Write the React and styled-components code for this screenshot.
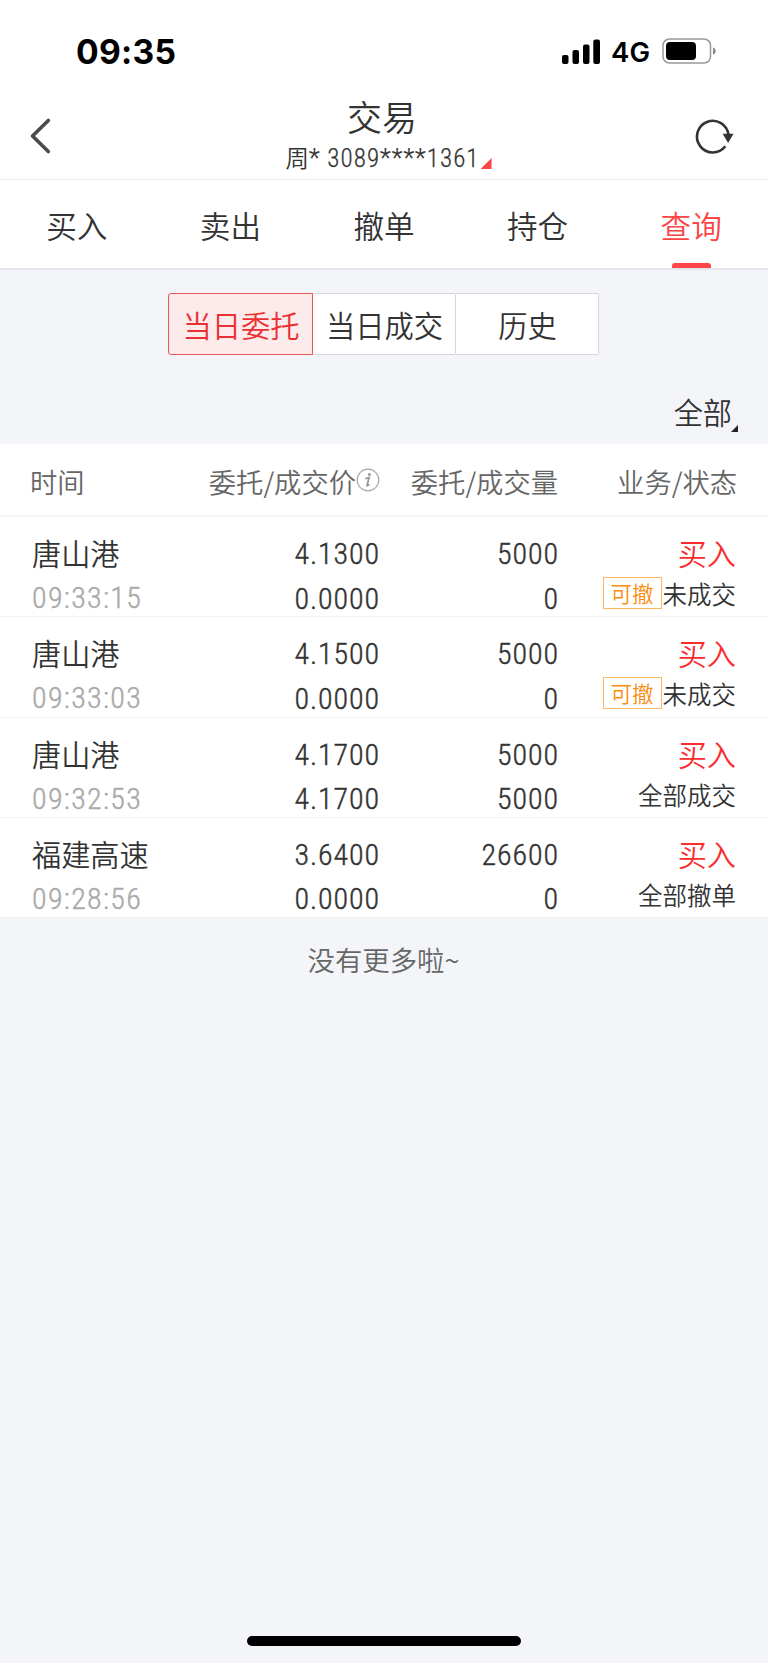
import React from "react";
import styled, { createGlobalStyle } from "styled-components";

const Global = createGlobalStyle`
  * { box-sizing: border-box; }
  body { margin: 0; background: #f3f5f9; }
`;

const Screen = styled.div`
  width: 768px;
  height: 1663px;
  display: flex;
  flex-direction: column;
  background: #f3f5f9;
  color: #333;
  font-family: "Noto Sans CJK SC", sans-serif;
  font-weight: 350;
  white-space: nowrap;
`;

const StatusBar = styled.div`
  height: 96px;
  padding: 6px 52px 0 76px;
  display: flex;
  align-items: center;
  justify-content: space-between;
  background: #fff;
  color: #000;
  font-family: Inter, sans-serif;
`;
const Clock = styled.span`
  font-size: 33.6px;
  font-weight: 700;
  letter-spacing: 0.3px;
`;
const StatusIcons = styled.div`
  display: flex;
  align-items: center;
`;
const Network = styled.span`
  margin: 2px 12px 0 11.5px;
  font-size: 27.5px;
  font-weight: 600;
`;

const Header = styled.header`
  height: 84px;
  padding: 0 32px 0 28px;
  display: grid;
  grid-template-columns: 54px 1fr 54px;
  align-items: center;
  justify-items: center;
  background: #fff;
  border-bottom: 1px solid #ebebed;
  & > svg { margin-bottom: 4px; }
  & > svg:first-child { justify-self: start; }
  & > svg:last-child { justify-self: end; }
`;
const TitleBlock = styled.div`
  display: flex;
  flex-direction: column;
  align-items: center;
  padding-bottom: 2px;
`;
const Title = styled.h1`
  margin: 0;
  font-size: 35px;
  line-height: 40px;
  font-weight: 350;
`;
const Account = styled.div`
  display: flex;
  align-items: center;
  height: 42px;
  margin-left: 13px;
  font-size: 23.5px;
  line-height: 42px;
`;
const AccountNumber = styled.span`
  padding-top: 4px;
  font-family: Roboto, sans-serif;
  font-size: 25px;
  font-stretch: 75%;
  letter-spacing: 1.05px;
  -webkit-text-stroke: 0.25px currentColor;
`;
const Corner = styled.i`
  align-self: flex-end;
  width: ${(p) => p.$size}px;
  height: ${(p) => p.$size}px;
  margin: 0 0 ${(p) => p.$lift || 0}px ${(p) => p.$gap}px;
  background: ${(p) => p.$color};
  clip-path: polygon(100% 0, 100% 100%, 0 100%);
`;

const Tabs = styled.nav`
  height: 90px;
  display: grid;
  grid-template-columns: repeat(5, 1fr);
  background: #fff;
  border-bottom: 2px solid #e4e4ea;
`;
const Tab = styled.div`
  display: flex;
  flex-direction: column;
  align-items: center;
  justify-content: space-between;
  padding-top: 22px;
  font-size: 30.6px;
  line-height: 46px;
  color: ${(p) => (p.$active ? "#fb4546" : "#333")};
  &::after {
    content: "";
    width: 39px;
    height: 5px;
    border-radius: 3px 3px 0 0;
    background: ${(p) => (p.$active ? "#fb4546" : "transparent")};
  }
`;

const Filters = styled.section`
  height: 174px;
  padding-top: 23px;
  display: flex;
  flex-direction: column;
  align-items: center;
`;
const Segments = styled.div`
  width: 431px;
  height: 62px;
  margin-right: 1px;
  display: grid;
  grid-template-columns: 145px 143px 143px;
`;
const Segment = styled.div`
  font-size: 29.3px;
  line-height: 60px;
  padding-left: 1px;
  text-align: center;
  background: ${(p) => (p.$active ? "#fdeaea" : "#fff")};
  color: ${(p) => (p.$active ? "#ea3032" : "#333")};
  border: 1px solid ${(p) => (p.$active ? "#e65557" : "#d6d6d8")};
  border-left-width: ${(p) => (p.$active ? 1 : 0)}px;
  border-radius: ${(p) => (p.$active ? "3px 0 0 3px" : "0 2px 2px 0")};
`;
const Scope = styled.div`
  align-self: flex-end;
  display: flex;
  margin: 34px 30px 0 0;
  font-size: 29.2px;
  line-height: 44px;
  height: 44px;
`;

const Row = styled.div`
  display: grid;
  grid-template-columns: 168px 179px 179px 178px;
  padding: 0 32px;
  background: #fff;
`;
const HeadRow = styled(Row)`
  height: 73px;
  border-bottom: 2px solid #f4f4f6;
  grid-template-columns: 170px 180px 178px 179px;
  padding: 1px 30px 0;
  font-size: 27.3px;
  line-height: 73px;
  color: #666;
`;
const HeadCell = styled.div`
  display: flex;
  align-items: center;
  justify-content: ${(p) => (p.$left ? "flex-start" : "flex-end")};
`;
const OrderRow = styled(Row)`
  height: 100.3px;
  padding-top: 13px;
  border-bottom: 1.5px solid #f3f3f7;
`;
const Cell = styled.div`
  display: flex;
  flex-direction: column;
  align-items: ${(p) => (p.$left ? "flex-start" : "flex-end")};
`;
const Name = styled.div`
  font-size: 29.2px;
  line-height: 44px;
  color: ${(p) => (p.$buy ? "#fb2c2e" : "#333")};
`;
const Digits = styled.div`
  font-family: Roboto, sans-serif;
  font-stretch: 75%;
  font-size: 30px;
  line-height: 44.5px;
  padding-top: ${(p) => (p.$first ? 2 : 0)}px;
  margin-top: ${(p) => (p.$left ? 2 : 0)}px;
  letter-spacing: ${(p) => (p.$muted ? 1.3 : 0.9)}px;
  margin-right: ${(p) => (p.$left ? 0 : -1)}px;
  color: ${(p) => (p.$muted ? "#aaa" : "#333")};
  -webkit-text-stroke: 0.4px currentColor;
`;
const State = styled.div`
  display: flex;
  align-items: center;
  gap: 1px;
  height: 40px;
  font-size: 24.5px;
  line-height: 36px;
`;
const Badge = styled.span`
  width: 59px;
  height: 32px;
  margin-bottom: 2px;
  border: 1px solid #fdb765;
  color: #fb8c0e;
  font-size: 21.5px;
  line-height: 29px;
  text-align: center;
`;

const Footer = styled.div`
  flex: 1;
  padding: 21px 1px 0 0;
  text-align: center;
  font-size: 27.4px;
  line-height: 40px;
  color: #666;
`;
const HomeBar = styled.div`
  width: 274px;
  height: 10px;
  margin: 0 auto 17px;
  border-radius: 5px;
  background: #000;
`;

const Signal = () => (
  <svg width="38" height="25" viewBox="0 0 38 25">
    <rect x="0" y="16" width="6.5" height="9" rx="2" />
    <rect x="10.5" y="11" width="6.5" height="14" rx="2" />
    <rect x="21" y="5.5" width="6.5" height="19.5" rx="2" />
    <rect x="31.3" y="0.5" width="6.7" height="24.5" rx="2" />
  </svg>
);
const Battery = () => (
  <svg width="54" height="26" viewBox="0 0 54 26">
    <rect x="1" y="1" width="47.5" height="24" rx="6.5" fill="none" stroke="#999" strokeWidth="1.5" />
    <rect x="4" y="4" width="30" height="18" rx="4" />
    <path d="M51 9.5c3.6 1 3.6 6 0 7z" fill="#888" />
  </svg>
);
const BackIcon = () => (
  <svg width="24" height="40" viewBox="0 0 24 40" fill="none" stroke="#4a4a4a" strokeWidth="3.6" strokeLinecap="round" strokeLinejoin="round">
    <path d="M20.3 4.5 4.5 20l15.8 15.5" />
  </svg>
);
const RefreshIcon = () => (
  <svg width="42" height="40" viewBox="0 0 42 40">
    <path d="M31.3 30.3A15.8 15.8 0 1 1 34.5 19" fill="none" stroke="#333" strokeWidth="2.6" />
    <path d="M28.7 17.8h10.8l-5.4 9.3z" fill="#333" />
  </svg>
);
const InfoGlyph = styled.svg`
  margin-bottom: 3px;
`;
const InfoIcon = () => (
  <InfoGlyph width="24" height="24" viewBox="0 0 24 24">
    <circle cx="12" cy="12" r="10.8" fill="none" stroke="#aaa" strokeWidth="1.2" />
    <circle cx="13.4" cy="6.6" r="1.5" fill="#999" />
    <path d="M9.3 10.6l3.8-.9-2.1 7.5c-.2 1 .7.7 2.2-.9" fill="none" stroke="#999" strokeWidth="1.8" />
  </InfoGlyph>
);

const tabs = ["买入", "卖出", "撤单", "持仓", "查询"];
const orders = [
  { name: "唐山港", time: "09:33:15", price: "4.1300", deal: "0.0000", qty: "5000", done: "0", state: "未成交", open: true },
  { name: "唐山港", time: "09:33:03", price: "4.1500", deal: "0.0000", qty: "5000", done: "0", state: "未成交", open: true },
  { name: "唐山港", time: "09:32:53", price: "4.1700", deal: "4.1700", qty: "5000", done: "5000", state: "全部成交" },
  { name: "福建高速", time: "09:28:56", price: "3.6400", deal: "0.0000", qty: "26600", done: "0", state: "全部撤单" },
];

export default function App() {
  return (
    <Screen>
      <Global />
      <StatusBar>
        <Clock>09:35</Clock>
        <StatusIcons>
          <Signal />
          <Network>4G</Network>
          <Battery />
        </StatusIcons>
      </StatusBar>
      <Header>
        <BackIcon />
        <TitleBlock>
          <Title>交易</Title>
          <Account>
            周<AccountNumber>* 3089****1361</AccountNumber>
            <Corner $size={11} $gap={1} $lift={9} $color="#fb4546" />
          </Account>
        </TitleBlock>
        <RefreshIcon />
      </Header>
      <Tabs>
        {tabs.map((t) => (
          <Tab key={t} $active={t === "查询"}>{t}</Tab>
        ))}
      </Tabs>
      <Filters>
        <Segments>
          <Segment $active>当日委托</Segment>
          <Segment>当日成交</Segment>
          <Segment>历史</Segment>
        </Segments>
        <Scope>
          全部
          <Corner $size={7} $gap={-1} $lift={1} $color="#222" />
        </Scope>
      </Filters>
      <HeadRow>
        <HeadCell $left>时间</HeadCell>
        <HeadCell>委托/成交价<InfoIcon /></HeadCell>
        <HeadCell>委托/成交量</HeadCell>
        <HeadCell>业务/状态</HeadCell>
      </HeadRow>
      {orders.map((o) => (
        <OrderRow key={o.time}>
          <Cell $left>
            <Name>{o.name}</Name>
            <Digits $left $muted>{o.time}</Digits>
          </Cell>
          <Cell>
            <Digits $first>{o.price}</Digits>
            <Digits>{o.deal}</Digits>
          </Cell>
          <Cell>
            <Digits $first>{o.qty}</Digits>
            <Digits>{o.done}</Digits>
          </Cell>
          <Cell>
            <Name $buy>买入</Name>
            <State>
              {o.open && <Badge>可撤</Badge>}
              {o.state}
            </State>
          </Cell>
        </OrderRow>
      ))}
      <Footer>没有更多啦~</Footer>
      <HomeBar />
    </Screen>
  );
}
